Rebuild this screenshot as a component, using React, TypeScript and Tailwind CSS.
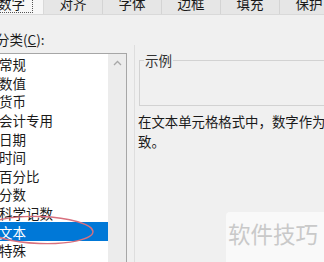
import React from "react"

const tabs = ["对齐", "字体", "边框", "填充", "保护"]

const categories = [
  "常规",
  "数值",
  "货币",
  "会计专用",
  "日期",
  "时间",
  "百分比",
  "分数",
  "科学记数",
  "文本",
  "特殊",
]

export default function App() {
  const selected = "文本"

  return (
    <div
      className="relative w-[324px] h-[262px] overflow-hidden bg-[#f0f0f0] text-[#1a1a1a]"
      style={{ fontFamily: '"Noto Sans CJK SC", "Noto Sans", sans-serif' }}
    >
      {/* tab strip */}
      <div className="flex h-[15px] border-b border-[#d9d9d9] bg-[#e6e6e6]">
        <div className="relative -ml-[8px] w-[52px] shrink-0 bg-[#f7f7f7] border-r border-[#d9d9d9] overflow-hidden">
          <div className="absolute left-[8px] top-0 w-[33px] h-[13px] border-r border-b border-dotted border-[#555]" />
          <div className="-mt-[7px] pl-[6px] text-[13.5px] leading-[20px]">数字</div>
        </div>
        {tabs.map((t) => (
          <div
            key={t}
            className="w-[59px] shrink-0 border-r border-[#d4d4d4] overflow-hidden text-center"
          >
            <div className="-mt-[7px] text-[13.5px] leading-[20px]">{t}</div>
          </div>
        ))}
      </div>

      <div className="flex">
        {/* left column */}
        <div className="w-[134px] shrink-0">
          <div className="mt-[14px] -ml-[4px] text-[13.5px] leading-[20px]">
            分类(<span className="underline">C</span>):
          </div>
          <div className="mt-[4px] -ml-[4px] w-[131px] h-[220px] flex border-t border-r border-[#a6a6a6] bg-white">
            <div className="flex-1 pt-[1px]">
              {categories.map((c) => (
                <div
                  key={c}
                  className={
                    c === selected
                      ? "h-[18.6px] flex items-center pl-[3px] text-[13.5px] bg-[#0078d7] text-white"
                      : "h-[18.6px] flex items-center pl-[3px] text-[13.5px]"
                  }
                >
                  {c}
                </div>
              ))}
            </div>
            <div className="w-[18px] bg-[#ececec] flex justify-center pt-[6px]">
              <svg width="9" height="6" viewBox="0 0 9 6">
                <path d="M1 5 L4.5 1.5 L8 5" fill="none" stroke="#a8a8a8" strokeWidth="1.3" />
              </svg>
            </div>
          </div>
        </div>

        {/* right column */}
        <div className="flex-1 mt-[30px] border-l border-[#dedede] pl-[3px]">
          <div className="relative mt-[15px] ml-[1px] h-[46px] border-t border-l border-b border-[#d2d2d2]">
            <div className="absolute -top-[11px] left-[4px] px-[1px] bg-[#f0f0f0] text-[13.5px] leading-[20px] text-[#333]">
              示例
            </div>
          </div>
          <div className="mt-[5px] text-[13.4px] leading-[20px] whitespace-nowrap">
            在文本单元格格式中，数字作为文本处理。单元格显示的内容与输入的内容完全一
          </div>
          <div className="text-[13.4px] leading-[20px]">致。</div>
        </div>
      </div>

      {/* red highlight ring */}
      <svg className="absolute left-0 top-[210px]" width="110" height="40" viewBox="0 0 110 40">
        <ellipse
          cx="40"
          cy="20"
          rx="53"
          ry="13.5"
          fill="none"
          stroke="#d8707e"
          strokeWidth="1.4"
          transform="rotate(2 40 20)"
        />
      </svg>

      {/* watermark */}
      <div className="absolute left-[226px] top-[212px] w-[110px] h-[60px] rounded-tl-[4px] bg-[#fafafa]/90 flex items-start pl-[2px] pt-[6px]">
        <span className="text-[22.5px] leading-[30px] tracking-[0px] text-[#c9c9c9]">软件技巧</span>
      </div>
    </div>
  )
}
